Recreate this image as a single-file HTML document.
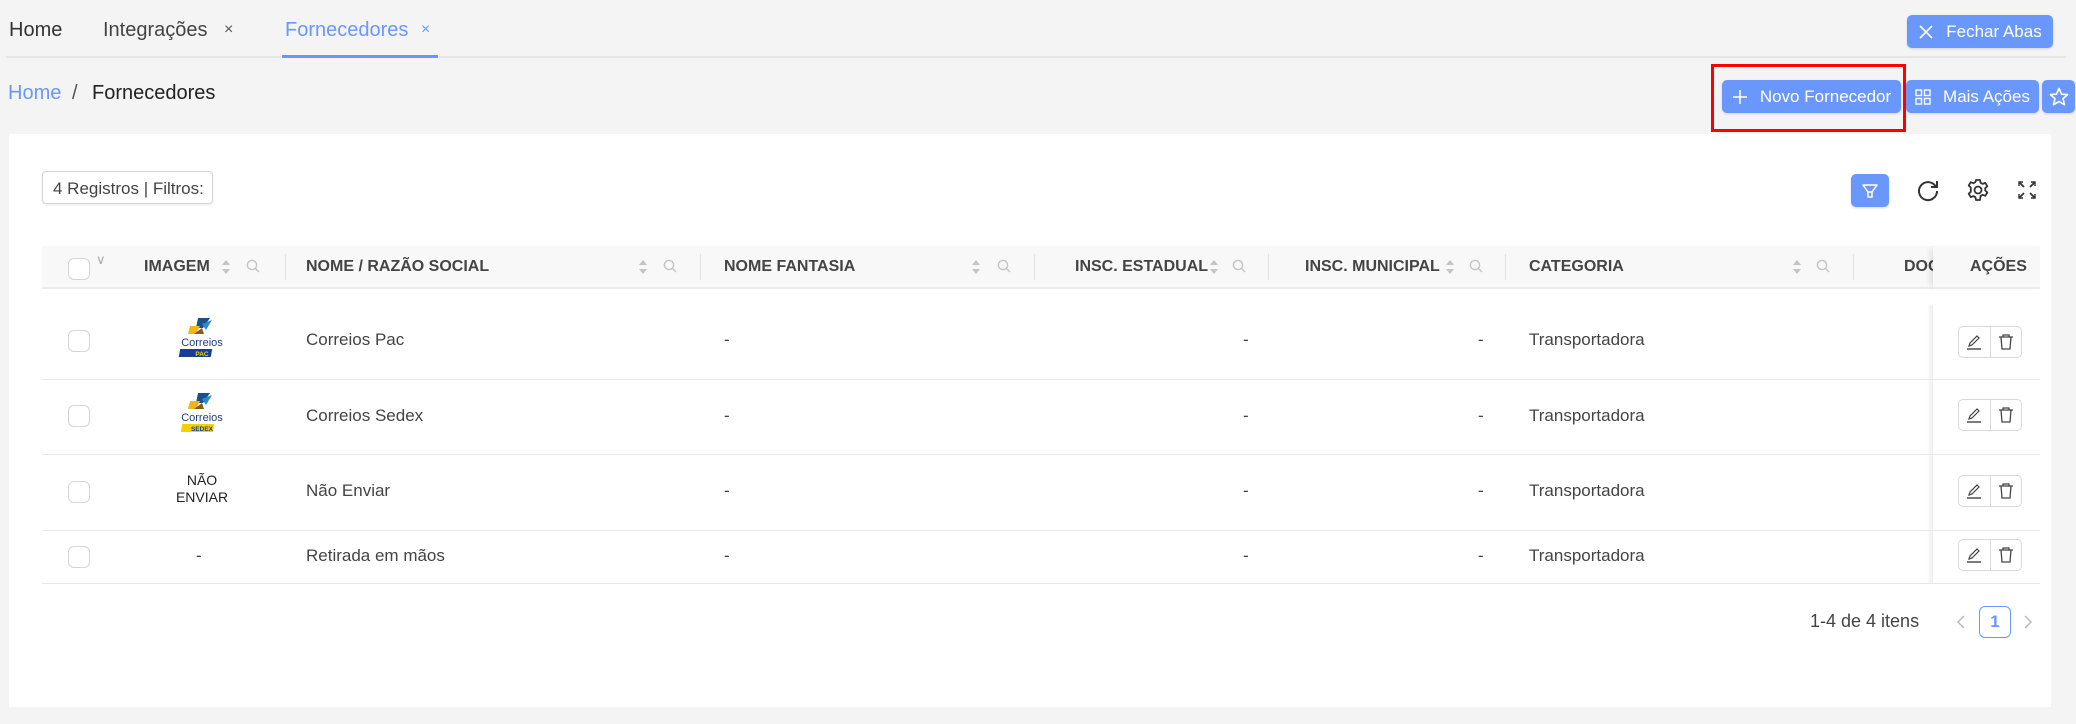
<!DOCTYPE html>
<html><head><meta charset="utf-8"><style>
*{box-sizing:border-box;margin:0;padding:0}
body{width:2076px;height:724px;background:#f4f4f4;font-family:"Liberation Sans",sans-serif;position:relative;overflow:hidden;color:#333}
.a{position:absolute;white-space:nowrap}
.blue{color:#6a97fb}
.btn{position:absolute;background:#6a97fb;color:#fff;border-radius:5px;font-size:17px;display:flex;align-items:center;justify-content:center;gap:12px;box-shadow:0 1px 2px rgba(0,0,0,.15)}
.th{position:absolute;top:258px;font-size:16px;font-weight:bold;color:#444}
.td{position:absolute;font-size:17px;color:#444}
.cb{position:absolute;width:22px;height:22px;border:1px solid #d5d5d5;border-radius:6px;background:#fff}
.div{position:absolute;top:254px;width:1px;height:26px;background:#e4e4e4}
.hl{position:absolute;left:42px;width:1998px;height:1px;background:#e8e8e8}
.act{position:absolute;left:1958px;width:64px;height:32px;border:1px solid #d9d9d9;border-radius:5px;background:#fff;display:flex}
.act div{flex:1;display:flex;align-items:center;justify-content:center}
.act div+div{border-left:1px solid #d9d9d9}
</style></head><body>
<!-- tabs -->
<div class="a" style="left:9px;top:19px;font-size:20px;color:#333">Home</div>
<div class="a" style="left:103px;top:19px;font-size:20px;color:#444">Integrações</div>
<div class="a" style="left:224px;top:21px;font-size:16px;color:#555">×</div>
<div class="a blue" style="left:285px;top:19px;font-size:20px">Fornecedores</div>
<div class="a blue" style="left:421px;top:21px;font-size:16px">×</div>
<div class="a" style="left:6px;top:56px;width:2060px;height:2px;background:#e6e6e6"></div>
<div class="a" style="left:282px;top:55px;width:156px;height:3px;background:#6a97fb"></div>
<div class="btn" style="left:1907px;top:15px;width:146px;height:33px"><svg width="16" height="16" viewBox="0 0 16 16"><path d="M2 2L14 14M14 2L2 14" stroke="#fff" stroke-width="1.6"/></svg>Fechar Abas</div>
<!-- breadcrumb -->
<div class="a blue" style="left:8px;top:82px;font-size:20px">Home</div>
<div class="a" style="left:72px;top:82px;font-size:20px;color:#555">/</div>
<div class="a" style="left:92px;top:82px;font-size:20px;color:#222">Fornecedores</div>
<div class="btn" style="left:1722px;top:80px;width:179px;height:33px"><svg width="16" height="16"><path d="M8 1V15M1 8H15" stroke="#fff" stroke-width="1.6"/></svg>Novo Fornecedor</div>
<div class="a" style="left:1711px;top:64px;width:195px;height:68px;border:3px solid #f00"></div>
<div class="btn" style="left:1906px;top:80px;width:133px;height:33px"><svg width="16" height="16"><g fill="none" stroke="#fff" stroke-width="1.4"><rect x="1" y="1" width="5.5" height="5.5"/><rect x="9.5" y="1" width="5.5" height="5.5"/><rect x="1" y="9.5" width="5.5" height="5.5"/><rect x="9.5" y="9.5" width="5.5" height="5.5"/></g></svg>Mais Ações</div>
<div class="btn" style="left:2042px;top:80px;width:33px;height:33px"><svg width="20" height="20" viewBox="0 0 20 20"><path d="M10 1.5L12.6 7.2 18.6 7.6 14 11.6 15.5 17.7 10 14.5 4.5 17.7 6 11.6 1.4 7.6 7.4 7.2Z" fill="none" stroke="#fff" stroke-width="1.6" stroke-linejoin="round"/></svg></div>
<!-- panel -->
<div class="a" style="left:9px;top:134px;width:2042px;height:573px;background:#fff"></div>
<div class="a" style="left:42px;top:171px;width:171px;height:33px;border:1px solid #d5d5d5;border-radius:4px;font-size:17px;color:#444;padding:7px 0 0 10px;box-shadow:0 1px 2px rgba(0,0,0,.08)">4 Registros | Filtros:</div>
<div class="btn" style="left:1851px;top:174px;width:38px;height:33px"><svg width="18" height="18" viewBox="0 0 18 18"><path d="M2 3H16L11 10V15H7V10Z" fill="none" stroke="#fff" stroke-width="1.5" stroke-linejoin="round"/><path d="M7 10H11" stroke="#fff" stroke-width="1.5"/></svg></div>
<svg class="a" style="left:1916px;top:178px" width="24" height="24" viewBox="0 0 24 24"><path d="M20 9A9 9 0 1 0 21 13" fill="none" stroke="#333" stroke-width="2"/><path d="M21 3V9H15" fill="none" stroke="#333" stroke-width="2"/></svg>
<svg class="a" style="left:1966px;top:178px" width="24" height="24" viewBox="0 0 24 24"><path d="M10 2h4l.6 2.8 2 1.1 2.7-1 2 3.4-2.1 1.9v2.3l2.1 1.9-2 3.4-2.7-1-2 1.1L14 22h-4l-.6-2.8-2-1.1-2.7 1-2-3.4 2.1-1.9V9.5L2.7 7.6l2-3.4 2.7 1 2-1.1Z" fill="none" stroke="#333" stroke-width="1.8" stroke-linejoin="round"/><circle cx="12" cy="12" r="3.5" fill="none" stroke="#333" stroke-width="1.8"/></svg>
<svg class="a" style="left:2017px;top:180px" width="20" height="20" viewBox="0 0 20 20"><g stroke="#333" stroke-width="1.8" fill="none"><path d="M2 2L7 7M2 18L7 13M18 2L13 7M18 18L13 13"/><path d="M2 6V2H6M14 2H18V6M2 14V18H6M18 14V18H14" stroke-width="1.4"/></g></svg>
<!-- header -->
<div class="a" style="left:42px;top:246px;width:1998px;height:43px;background:#f8f8f8;border-bottom:2px solid #ececec"></div>
<div class="cb" style="left:68px;top:258px"></div>
<div class="a" style="left:96px;top:252px;font-size:13px;color:#aaa">∨</div>
<div class="th" style="left:144px">IMAGEM</div>
<div class="th" style="left:306px">NOME / RAZÃO SOCIAL</div>
<div class="th" style="left:724px">NOME FANTASIA</div>
<div class="th" style="left:1075px">INSC. ESTADUAL</div>
<div class="th" style="left:1305px">INSC. MUNICIPAL</div>
<div class="th" style="left:1529px">CATEGORIA</div>
<div class="th" style="left:1904px;width:29px;overflow:hidden">DOCUMENTO</div>
<div class="a" style="left:1933px;top:246px;width:107px;height:43px;background:#f8f8f8;border-bottom:2px solid #ececec;box-shadow:-5px 0 6px -3px rgba(0,0,0,.12)"></div>
<div class="th" style="left:1970px">AÇÕES</div>
<div class="div" style="left:285px"></div><div class="div" style="left:700px"></div><div class="div" style="left:1034px"></div><div class="div" style="left:1268px"></div><div class="div" style="left:1505px"></div><div class="div" style="left:1853px"></div>
<svg width="0" height="0" style="position:absolute"><defs><g id="so"><path d="M0 5L4 0 8 5Z M0 9L8 9 4 14Z" fill="#c4c4c4"/></g><g id="se"><circle cx="6" cy="6" r="4.6" fill="none" stroke="#c4c4c4" stroke-width="1.4"/><path d="M9.5 9.5L13 13" stroke="#c4c4c4" stroke-width="1.4"/></g></defs></svg>
<svg class="a" style="left:222px;top:260px" width="8" height="14"><use href="#so"/></svg><svg class="a" style="left:246px;top:259px" width="14" height="14"><use href="#se"/></svg>
<svg class="a" style="left:639px;top:260px" width="8" height="14"><use href="#so"/></svg><svg class="a" style="left:663px;top:259px" width="14" height="14"><use href="#se"/></svg>
<svg class="a" style="left:972px;top:260px" width="8" height="14"><use href="#so"/></svg><svg class="a" style="left:997px;top:259px" width="14" height="14"><use href="#se"/></svg>
<svg class="a" style="left:1210px;top:260px" width="8" height="14"><use href="#so"/></svg><svg class="a" style="left:1232px;top:259px" width="14" height="14"><use href="#se"/></svg>
<svg class="a" style="left:1446px;top:260px" width="8" height="14"><use href="#so"/></svg><svg class="a" style="left:1469px;top:259px" width="14" height="14"><use href="#se"/></svg>
<svg class="a" style="left:1793px;top:260px" width="8" height="14"><use href="#so"/></svg><svg class="a" style="left:1816px;top:259px" width="14" height="14"><use href="#se"/></svg>
<!-- fixed column shadow -->
<div class="a" style="left:1927px;top:305px;width:6px;height:278px;background:linear-gradient(to right,rgba(0,0,0,0),rgba(0,0,0,.07))"></div>
<!-- rows -->
<div class="hl" style="top:379px"></div><div class="hl" style="top:454px"></div><div class="hl" style="top:530px"></div><div class="hl" style="top:583px"></div>
<div class="cb" style="left:68px;top:330px"></div><div class="cb" style="left:68px;top:405px"></div><div class="cb" style="left:68px;top:481px"></div><div class="cb" style="left:68px;top:546px"></div>
<!-- logos -->
<svg class="a" style="left:176px;top:316px" width="52" height="44" viewBox="0 0 52 44"><path d="M22 2L34 2 27 12 20 12Z" fill="#1d4f8c"/><path d="M26 8L36 4 30 14Z" fill="#2b8bc7"/><path d="M14 10L24 10 20 18 12 18Z" fill="#f0b518"/><path d="M18 18L26 12 28 18Z" fill="#8a5a1e"/><text x="26" y="30" font-size="11" text-anchor="middle" fill="#1d3f7a" font-family="Liberation Sans">Correios</text><rect x="10" y="33" width="32" height="8" fill="#143f95" transform="skewX(-10)"/><text x="26" y="40" font-size="6.5" font-weight="bold" text-anchor="middle" fill="#f5d000" font-family="Liberation Sans">PAC</text></svg>
<svg class="a" style="left:176px;top:391px" width="52" height="44" viewBox="0 0 52 44"><path d="M22 2L34 2 27 12 20 12Z" fill="#1d4f8c"/><path d="M26 8L36 4 30 14Z" fill="#2b8bc7"/><path d="M14 10L24 10 20 18 12 18Z" fill="#f0b518"/><path d="M18 18L26 12 28 18Z" fill="#8a5a1e"/><text x="26" y="30" font-size="11" text-anchor="middle" fill="#1d3f7a" font-family="Liberation Sans">Correios</text><rect x="12" y="33" width="32" height="8" fill="#f5d000" transform="skewX(-10)"/><text x="26" y="40" font-size="6.5" font-weight="bold" text-anchor="middle" fill="#143f95" font-family="Liberation Sans">SEDEX</text></svg>
<div class="a" style="left:160px;top:472px;width:84px;text-align:center;font-size:14px;color:#222;line-height:17px">NÃO<br>ENVIAR</div>
<div class="td" style="left:196px;top:546px">-</div>
<div class="td" style="left:306px;top:330px">Correios Pac</div>
<div class="td" style="left:306px;top:406px">Correios Sedex</div>
<div class="td" style="left:306px;top:481px">Não Enviar</div>
<div class="td" style="left:306px;top:546px">Retirada em mãos</div>
<div class="td" style="left:724px;top:330px">-</div><div class="td" style="left:724px;top:406px">-</div><div class="td" style="left:724px;top:481px">-</div><div class="td" style="left:724px;top:546px">-</div>
<div class="td" style="left:1243px;top:330px">-</div><div class="td" style="left:1243px;top:406px">-</div><div class="td" style="left:1243px;top:481px">-</div><div class="td" style="left:1243px;top:546px">-</div>
<div class="td" style="left:1478px;top:330px">-</div><div class="td" style="left:1478px;top:406px">-</div><div class="td" style="left:1478px;top:481px">-</div><div class="td" style="left:1478px;top:546px">-</div>
<div class="td" style="left:1529px;top:330px">Transportadora</div><div class="td" style="left:1529px;top:406px">Transportadora</div><div class="td" style="left:1529px;top:481px">Transportadora</div><div class="td" style="left:1529px;top:546px">Transportadora</div>
<!-- action buttons -->
<svg width="0" height="0" style="position:absolute"><defs><g id="ed"><path d="M4 13L5 10 12 3 14 5 7 12Z" fill="none" stroke="#444" stroke-width="1.2"/><path d="M2 16H16" stroke="#444" stroke-width="1.4"/></g><g id="tr"><path d="M2 4H16M6 4V2H12V4" fill="none" stroke="#444" stroke-width="1.3"/><path d="M4 4L5 16H13L14 4" fill="none" stroke="#444" stroke-width="1.3"/></g></defs></svg>
<div class="act" style="top:326px"><div><svg width="18" height="18"><use href="#ed"/></svg></div><div><svg width="18" height="18"><use href="#tr"/></svg></div></div>
<div class="act" style="top:399px"><div><svg width="18" height="18"><use href="#ed"/></svg></div><div><svg width="18" height="18"><use href="#tr"/></svg></div></div>
<div class="act" style="top:475px"><div><svg width="18" height="18"><use href="#ed"/></svg></div><div><svg width="18" height="18"><use href="#tr"/></svg></div></div>
<div class="act" style="top:539px"><div><svg width="18" height="18"><use href="#ed"/></svg></div><div><svg width="18" height="18"><use href="#tr"/></svg></div></div>
<!-- pagination -->
<div class="a" style="left:1810px;top:611px;font-size:18px;color:#444">1-4 de 4 itens</div>
<svg class="a" style="left:1955px;top:614px" width="12" height="16"><path d="M9 2L3 8 9 14" fill="none" stroke="#bbb" stroke-width="1.5"/></svg>
<div class="a" style="left:1979px;top:606px;width:32px;height:32px;border:1px solid #6a97fb;border-radius:6px;color:#6a97fb;font-size:17px;font-weight:bold;text-align:center;line-height:30px">1</div>
<svg class="a" style="left:2022px;top:614px" width="12" height="16"><path d="M3 2L9 8 3 14" fill="none" stroke="#bbb" stroke-width="1.5"/></svg>
</body></html>
